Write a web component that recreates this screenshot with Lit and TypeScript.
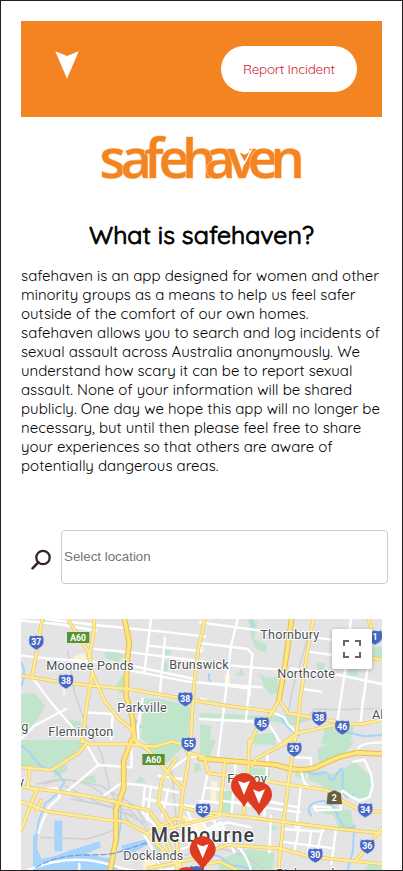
import { LitElement, html, css, svg } from "lit";
import { customElement, property } from "lit/decorators.js";

/** A single line of text tracked out to a given width. */
@customElement("fit-line")
class FitLine extends LitElement {
  @property() text = "";
  @property({ type: Number }) width = 0;

  static styles = css`
    :host { display: block; white-space: nowrap; }
    .line { display: inline-block; }
  `;

  updated() {
    const el = this.renderRoot.querySelector<HTMLElement>(".line")!;
    el.style.letterSpacing = "0";
    const natural = el.getBoundingClientRect().width;
    const gap = (this.width - natural) / (this.text.length - 1);
    el.style.letterSpacing = `${gap}px`;
    el.style.marginRight = `${-gap}px`;
  }

  render() {
    return html`<span class="line">${this.text}</span>`;
  }
}

const GREENS = [
  "M0 225L40 222 62 245 72 262 50 300 20 340 0 330Z",
  "M135 300L180 308 182 352 150 338Z",
  "M250 98L280 92 308 112 290 128 255 118Z",
  "M294 180L312 165 312 215 296 225 285 205Z",
  "M366 238L420 240 470 252 508 262 500 375 430 420 385 378 360 360Z",
  "M0 363L185 363 192 375 150 415 95 448 0 440Z",
  "M428 93h20v16h-20z", "M425 130l18-4-6 42-16-4z",
  "M66 0h22v14H66z",
  "M332 375L402 388 500 372 470 400 430 440 385 400Z",
  "M185 478L220 468 228 492 190 490Z", "M340 490l20-20 16 22z",
  "M98 452l38-16 4 18-40 22z", "M520 435l14-6 8 24-22 10z",
  "M680 0L710 10 700 60 738 78 735 102 705 88 690 55Z",
  "M642 170l20-22 8 22z", "M715 165L740 178 770 172 772 220 750 228 730 205Z",
  "M887 130l26 4-4 24-22-6z", "M980 148l32 4v20l-30-2z", "M1060 84h23v38l-30-6z",
  "M537 282L680 288 750 292 770 285 880 298 820 320 760 308 690 300 537 298Z",
  "M537 315l36 6-10 60-26 34z", "M698 348L762 340 764 378 698 376Z",
  "M915 325L1000 320 985 385 950 372 900 375Z",
  "M537 360l48 2-18 50-30 2z",
  "M888 390L950 362 1000 370 970 405 895 440Z",
  "M603 512l30 4-6 66-28-3z", "M686 445l62 6-4 26-60-5z",
  "M860 460L900 455 920 470 975 445 1000 430 1050 470 1050 535 1010 540 965 515 925 520 890 490 865 485Z",
  "M930 560L990 575 1000 638 950 625 940 590 890 578Z",
  "M600 720L680 690 760 700 755 753 590 753Z",
  "M395 640l22 20 4 90-20-60z",
  "M825 455h30l-4 24-28-4z", "M740 622h26v12h-26z", "M1042 735h41v18h-50z",
];

const WATER_AREAS = [
  "M100 605h24v92h-24z",
  "M36 650L52 636 48 690 62 720 100 712 160 690 235 667 240 685 195 705 270 720 290 753 36 753Z",
  "M300 680L375 660 385 675 310 715Z",
];
const WATER_LINES = [
  "M0 130Q18 160 2 200", "M2 380L25 400 55 438 110 462 130 490 108 525 72 555 52 610 44 680",
  "M345 305l14 20", "M565 165Q560 180 572 195",
  "M862 460Q880 470 900 462T925 475 950 462 965 490 1000 525",
  "M870 590Q850 560 890 548T950 590 1000 620L995 700 980 753",
  "M775 290L800 325 835 350", "M980 340L1030 352 1083 348",
  "M537 715Q590 700 610 722T650 740L700 753", "M690 0l8 24",
  "M300 562v50l-10 60",
];
const RAILS = [
  "M140 95L160 220 200 330 240 400 270 520 330 620",
  "M50 495L120 478 240 500 340 560 380 620",
  "M110 510L200 550 330 575 385 640", "M150 540L260 560 370 610",
  "M70 495Q170 460 250 530T262 640L200 660 60 655",
  "M130 500L250 560 340 590", "M865 40L815 210 800 290",
  "M850 305L880 270 960 272 1083 268", "M620 670L730 753",
  "M490 710Q600 660 700 730", "M450 430L480 753",
];
const STREETS = [
  "M0 5L110 15 225 35", "M75 0l148 18 200 20 130 15", "M0 110L80 118 210 128 330 140 520 180",
  "M220 90L330 100 550 128", "M390 0L370 160", "M432 55L416 230", "M380 80l160 16",
  "M330 155L500 188 720 205", "M36 178L90 250 180 355", "M40 130l-6 50",
  "M190 280L275 285 270 360", "M135 270L40 320 0 360", "M365 240L350 330 350 370",
  "M312 430l20-60", "M197 378L232 438 332 445 330 365",
  "M232 438L140 515", "M250 528L302 492 372 500 470 520", "M78 510l30-2 8 26-32 30-22 50-10 28",
  "M372 500L365 580 412 630", "M390 502l-12 100", "M412 470l70 10", "M442 510l-18 80",
  "M372 540L440 552", "M412 553L495 560 550 567", "M432 463L500 415 550 410",
  "M537 10L720 35 880 55 930 62", "M650 0L630 80 612 240 600 340 590 420",
  "M537 72L680 90 694 105 685 230", "M537 190L680 208", "M537 130L690 145 780 152",
  "M694 110l-20 200", "M860 98L935 108", "M810 148L940 165 1083 195",
  "M990 0L970 170 948 315", "M1040 145L1018 310", "M845 210L900 218",
  "M537 300L740 310 760 340 780 375", "M755 280L790 295 800 315 830 345",
  "M645 420L632 580", "M740 400l-10 190", "M820 415l50 2 0 20",
  "M838 450L850 490 865 505", "M840 500L825 630", "M657 555l180 25", "M710 540l120 25",
  "M597 545l80 10", "M537 545L600 552", "M550 505l60 8", "M560 463l-20 100",
  "M750 590L745 700", "M785 630l120 8 3-14", "M835 620l-15 80", "M870 640l-10 70",
  "M780 668l160 20", "M945 630l-14 105", "M905 630l-16 60",
  "M997 428L1030 422 1050 465 1055 500 1045 535 1015 545 985 530 965 515 955 530 960 572 885 574 878 562 930 566",
  "M537 640L620 610 690 625", "M497 620L597 595", "M510 655L600 610 640 700", "M540 600l50 90",
  "M570 590l50 90", "M500 580l60 120", "M480 690L620 650", "M475 660L610 625",
  "M20 753Q150 700 270 738T480 740", "M175 735v18", "M370 648L400 700 420 753",
  "M640 680Q670 690 690 753", "M1010 390Q1020 370 1083 370",
];
const ROADS = [
  "M64 0L42 128 32 176", "M0 170L112 188 212 200 322 210 472 236 552 250 637 263 757 278",
  "M140 0L202 98 214 163 252 248 292 298 330 330 350 375",
  "M220 0L217 50 206 105 214 163 200 240 182 370",
  "M552 0L532 88 517 218 509 378 497 460 485 520 477 600",
  "M687 378L702 338 752 283 774 243 802 283 877 296 967 312 1017 316 1083 303",
  "M685 363L682 443 667 583", "M877 0L857 108 837 248 827 338 822 363 807 453 787 613 772 753",
  "M777 378L827 343 917 323 967 313", "M822 358L707 418 692 440",
  "M1042 0L1057 48 1060 70", "M1037 113L1083 123",
  "M0 445L92 453 172 403 197 373", "M182 363L205 375 312 375 402 383 452 368 482 375 502 400 552 415",
  "M0 503L182 528 282 548 332 563 382 573 422 623 452 703 470 753",
  "M0 548L82 578 262 603 312 608 377 643 475 743", "M377 643L462 598 487 605",
  "M47 513L0 633", "M27 443L20 503 45 515", "M60 545l-15 30",
  "M347 368L382 393 442 463 487 513", "M465 420L422 483 412 553 462 633 477 743",
  "M382 748L552 713", "M377 643L597 590",
  "M552 423L562 463 687 478 807 498 917 513 977 553 1027 578 1083 578",
  "M612 423L597 583", "M480 565L537 578 707 598 937 628 1083 643",
  "M550 703L617 678 697 683 777 688 867 713 1083 735",
  "M1083 628L1007 723", "M537 738L597 728 647 753",
];
const MAJOR = [
  "M310 0L325 70 318 130 315 230 335 300 340 360 332 363 308 425 308 510 285 570 285 660 268 753",
  "M812 0L792 138 774 243", "M537 418L767 438 Q830 460 877 448L957 413 1007 401 1083 405",
];

type Label = [string, number, number, number];
const LABELS: Label[] = [
  ["Moonee Ponds", 76, 152, 262], ["Brunswick", 445, 149, 178], ["Parkville", 289, 278, 148],
  ["Flemington", 82, 352, 195], ["g", 1, 336, 20], ["Thornbury", 718, 59, 177],
  ["Northcote", 769, 177, 173], ["Al", 1053, 299, 34], ["Fitzroy", 619, 493, 118],
  ["y", -9, 501, 19], ["Docklands", 307, 723, 180], ["Richmond", 765, 777, 175],
];
const SHIELDS: [string, number, number][] = [
  ["37", 46, 70], ["38", 135, 187], ["38", 493, 240], ["55", 503, 376], ["1", 1062, 55],
  ["45", 722, 315], ["38", 895, 298], ["46", 964, 325], ["29", 820, 391], ["34", 1033, 573],
  ["36", 1039, 682], ["30", 883, 709], ["32", 546, 574], ["", 527, 761],
];
const SIGNS = [[138, 39], [364, 405]];
const PINS = [[497, 785], [669, 503], [714, 529], [545, 693]];

@customElement("city-map")
class CityMap extends LitElement {
  static styles = css`
    :host { display: block; position: relative; height: 251px; overflow: hidden; background: #e4e4e4; }
    .canvas { display: block; width: 100%; height: 251px; }
    .line { fill: none; stroke-linejoin: round; stroke-linecap: round; }
    .green { fill: #c1e5cb; }
    .cream { fill: #fdf3d4; }
    .water { fill: #a5d3fb; }
    .stream { stroke: #a5d3fb; stroke-width: 6; }
    .rail { stroke: #cfcfd3; stroke-width: 4; }
    .street { stroke: #fff; stroke-width: 7; }
    .casing { stroke: #efc956; stroke-width: 11; }
    .road { stroke: #fdec9d; stroke-width: 7; }
    .wide-casing { stroke: #e8bd43; stroke-width: 17; }
    .wide { stroke: #fde583; stroke-width: 11; }
    .tunnel { stroke: #7d9dd9; stroke-width: 4; stroke-dasharray: 17 8; }
    text { font-family: Roboto, "Noto Sans", sans-serif; }
    .label { font-size: 38px; fill: #4b4f56; stroke: #fff; stroke-width: 6; stroke-linejoin: round; paint-order: stroke; }
    .city { font-size: 59px; font-weight: 500; fill: #3c4048; }
    .plate { fill: #4668c4; stroke: #e9eefb; stroke-width: 1.5; }
    .sign { fill: #589333; }
    .brown { fill: #685f43; }
    .num { font-size: 26px; font-weight: 700; fill: #fff; text-anchor: middle; }
    .pin { fill: #df3b20; }
    .arrow { fill: #fff; }
    .full {
      position: absolute; top: 10px; right: 10px; width: 40px; height: 40px; padding: 0; border: 0;
      border-radius: 2px; background: #fff; box-shadow: 0 1px 4px rgba(0, 0, 0, 0.3);
      display: grid; place-items: center;
    }
    .corners { width: 18px; height: 18px; fill: #666; }
  `;

  private lines(paths: string[], cls: string) {
    return paths.map((d) => svg`<path class="line ${cls}" d=${d} />`);
  }

  render() {
    return html`
      <svg class="canvas" viewBox="0 0 1083 753">
        ${GREENS.map((d) => svg`<path class="green" d=${d} />`)}
        <path class="cream" d="M155 115l35-15 8 28-30 12zM125 205h8v30h-8zM610 165h18v30l-16 10zM537 235l20 2v12h-20zM1022 235l8 1-4 40-8-1zM485 590l55 10 20 50-55 30-25-30zM570 485l20 4-6 60-15-3zM528 83h20v18h-20zM370 700l35 30-10 23h-30z" />
        ${WATER_AREAS.map((d) => svg`<path class="water" d=${d} />`)}
        ${this.lines(WATER_LINES, "stream")}
        ${this.lines(RAILS, "rail")}
        ${this.lines(STREETS, "street")}
        ${this.lines(ROADS, "casing")}
        ${this.lines(MAJOR, "wide-casing")}
        ${this.lines(ROADS, "road")}
        ${this.lines(MAJOR, "wide")}
        <path class="line tunnel" d="M45 745Q110 708 190 708T290 700L375 672" />
        ${LABELS.map(([t, x, y, w]) => svg`<text class="label" x=${x} y=${y} textLength=${w}>${t}</text>`)}
        <text class="label city" x="389" y="669" textLength="310">Melbourne</text>
        ${SIGNS.map(([x, y]) => svg`<g transform="translate(${x} ${y})">
          <rect class="sign" width="67" height="33" /><text class="num" x="33" y="26">A60</text></g>`)}
        ${SHIELDS.map(([t, x, y]) => svg`<g transform="translate(${x} ${y})">
          <path class="plate" d="M-19-21Q-10-17 0-21 10-17 19-21 25-10 22 3 18 15 0 23-18 15-22 3-25-10-19-21Z" />
          <text class="num" y="9">${t}</text></g>`)}
        <g transform="translate(940 538)">
          <path class="brown" d="M0-24L20-15 23 18H-23L-20-15Z" /><text class="num" y="8">2</text>
        </g>
        ${PINS.map(([x, y]) => svg`<g transform="translate(${x} ${y})">
          <path class="pin" d="M0 61C-12 36-39 23-39-2A39 39 0 0 1 39-2C39 23 12 36 0 61Z" />
          <path class="arrow" d="M-18-18L0-11 18-18 0 25Z" /></g>`)}
      </svg>
      <button class="full" aria-label="Toggle fullscreen view">
        <svg class="corners" viewBox="0 0 18 18">
          <path d="M0 0v6h2V2h4V0zM16 0h-4v2h4v4h2V0zM16 16h-4v2h6v-6h-2zM2 12H0v6h6v-2H2z" />
        </svg>
      </button>
    `;
  }
}

const ABOUT = [
  "safehaven is an app designed for women and other",
  "minority groups as a means to help us feel safer",
  "outside of the comfort of our own homes.",
  "safehaven allows you to search and log incidents of",
  "sexual assault across Australia anonymously. We",
  "understand how scary it can be to report sexual",
  "assault. None of your information will be shared",
  "publicly. One day we hope this app will no longer be",
  "necessary, but until then please feel free to share",
  "your experiences so that others are aware of",
  "potentially dangerous areas.",
];

@customElement("app-root")
class AppRoot extends LitElement {
  static styles = css`
    :host { display: block; }
    .page {
      box-sizing: border-box; width: 403px; height: 871px; padding: 20px 20px 0; overflow: hidden;
      border: 1px solid #231f20; background: #fff; color: #000;
      display: flex; flex-direction: column;
      font-family: Quicksand, Lato, sans-serif;
    }
    .bar {
      flex: none; box-sizing: border-box; height: 96px; padding: 0 25px 0 34px; background: #f48422;
      display: flex; align-items: center; justify-content: space-between;
    }
    .mark { width: 24px; height: 28px; fill: #fff; margin-bottom: 8px; }
    .report {
      width: 136px; height: 46px; border: 0; border-radius: 23px; background: #fff; color: #d0202e;
      font: 400 13.333px Quicksand, Lato, sans-serif; padding: 0;
      display: flex; align-items: center; justify-content: center;
    }
    .logo { flex: none; align-self: center; display: block; overflow: visible; width: 205px; height: 50px; margin-top: 15px; }
    .word {
      font: 600 54px "Open Sans", "Noto Sans", sans-serif; fill: #f48422; stroke: #fbd2a4; stroke-width: 1.2;
      stroke-linejoin: round; paint-order: stroke;
    }
    .notch { fill: #f48422; stroke: #fff; stroke-width: 1.5; }
    .title {
      flex: none; margin: 38px 0 0; height: 30px; line-height: 30px; align-self: center;
      font-size: 25px; font-weight: 400; -webkit-text-stroke: 0.9px #000;
    }
    .about { flex: none; margin: 16px 0 0; font-size: 15px; line-height: 19px; white-space: nowrap; }
    .row { display: block; }
    .search { flex: none; display: flex; align-items: center; margin: 55px -6px 35px 9px; }
    .lens { flex: none; width: 22px; height: 23px; margin: 5px 9px 0 0; fill: none; stroke: #33232b; }
    .field {
      flex: 1; min-width: 0; box-sizing: border-box; height: 54px; padding: 0 2px 1px; border: 1px solid #ccc;
      border-radius: 4px; font: 13.333px "Liberation Sans", Arial, sans-serif; background: #fff;
    }
    .field::placeholder { color: #757575; }
    .map { flex: none; }
  `;

  render() {
    return html`
      <main class="page">
        <header class="bar">
          <svg class="mark" viewBox="0 0 24 28"><path d="M.3.3L12 5 23.7.3 12 27.8Z" /></svg>
          <button class="report"><fit-line text="Report Incident" width="92"></fit-line></button>
        </header>
        <svg class="logo" viewBox="99 132 205 50">
          <text class="word" y="177.5" x="99.5 120.5 144 158.5 182 204.5 227.5 247.5 270.5">safehaven</text>
          <path class="notch" d="M238 150.500L244.500 154 251 150.500 244.500 163Z" />
        </svg>
        <h1 class="title"><fit-line text="What is safehaven?" width="225"></fit-line></h1>
        <section class="about">${ABOUT.map((t) => html`<span class="row">${t}</span>`)}</section>
        <div class="search">
          <svg class="lens" viewBox="0 0 22 23">
            <circle cx="13" cy="9.500" r="6.700" stroke-width="2.300" />
            <path d="M8.300 14.300L2.500 20.300" stroke-width="2.600" stroke-linecap="round" />
          </svg>
          <input class="field" placeholder="Select location" />
        </div>
        <city-map class="map"></city-map>
      </main>
    `;
  }
}
